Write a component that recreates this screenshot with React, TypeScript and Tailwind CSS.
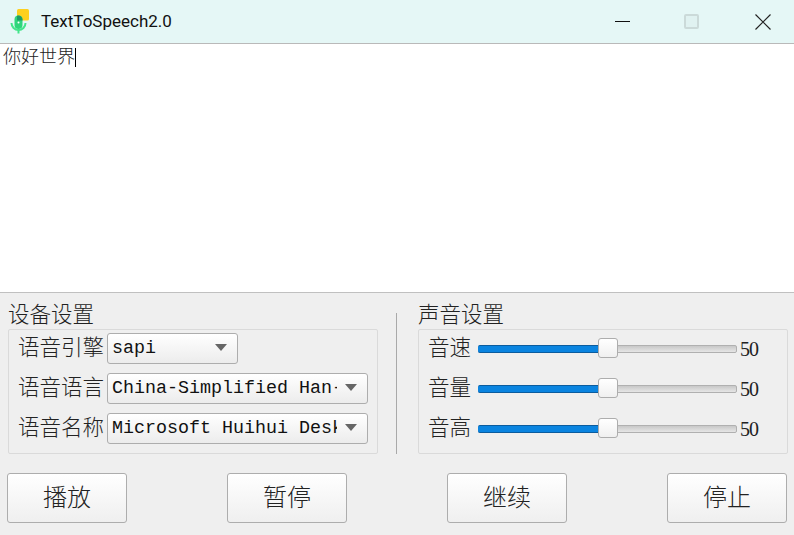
import React from 'react';

const cjk = "font-['Liberation_Serif','Noto_Sans_CJK_SC',serif]";

// 下拉框
const Combo = ({ text, width }: { text: string; width: string }) => (
  <div className={`${width} h-[31px] flex items-center justify-between pl-[4px] pr-[10px] bg-gradient-to-b from-white to-[#ececec] border border-[#adadad] rounded-[3px]`}>
    <span className="flex-1 min-w-0 pt-[1px] overflow-hidden whitespace-pre font-['Liberation_Mono',monospace] text-[18.33px] leading-[24px] text-[#111]">{text}</span>
    <span className="shrink-0 ml-[8px] mb-[2px] w-0 h-0 border-x-[6px] border-x-transparent border-t-[7px] border-t-[#666]" />
  </div>
);

const DeviceRow = ({ label, text, width }: { label: string; text: string; width: string }) => (
  <div className="flex items-center h-[31px]">
    <span className={`w-[89px] pt-[1px] text-[21.5px] font-light leading-none text-[#222] ${cjk}`}>{label}</span>
    <Combo text={text} width={width} />
  </div>
);

const SliderRow = ({ label }: { label: string }) => (
  <div className="flex items-center h-[31px]">
    <span className={`w-[50px] pt-[1px] text-[21.5px] font-light leading-none text-[#222] ${cjk}`}>{label}</span>
    <div className="relative mt-[1px] w-[259px] h-[8px] flex">
      <div className="w-[122px] bg-[#0a84e0] border-y border-[#0b5c9e] rounded-l-[2px]" />
      <div className="flex-1 bg-gradient-to-b from-[#c8c8c8] to-[#e6e6e6] border border-[#b0b0b0] rounded-r-[2px]" />
      <div className="absolute left-[120px] top-[-7px] w-[20px] h-[20px] bg-gradient-to-b from-white to-[#f0f0f0] border border-[#adadad] rounded-[3px]" />
    </div>
    <span className="ml-[3px] pt-[1px] font-['Liberation_Serif',serif] text-[20px] leading-none tracking-[-1px] text-[#222]">50</span>
  </div>
);

const ActionButton = ({ label }: { label: string }) => (
  <button className={`w-[120px] h-[50px] bg-gradient-to-b from-white to-[#efefef] border border-[#adadad] rounded-[3px] text-[24px] font-light text-[#222] ${cjk}`}>
    {label}
  </button>
);

const AppIcon = () => (
  <svg width="24" height="25" viewBox="0 0 24 25" className="shrink-0">
    <rect x="7" y="0" width="12" height="11.5" rx="1.5" fill="#fdd01f" />
    <rect x="4.5" y="6.5" width="8" height="13.5" rx="4" fill="#2fd67b" />
    <path d="M7 6.8a4 4 0 0 1 5.5 3.7v1H7z" fill="#1f9a66" />
    <path d="M1.5 14a7 7 0 0 0 14 0" fill="none" stroke="#43e58a" strokeWidth="2" />
    <rect x="7.5" y="21" width="2" height="3.5" fill="#43e58a" />
    <circle cx="8.5" cy="13.5" r="1" fill="#fff" />
  </svg>
);

export default function App() {
  return (
    <div className="w-[794px] h-[535px] flex flex-col bg-[#efefef] overflow-hidden">
      {/* Title bar */}
      <div className="h-[44px] shrink-0 flex items-center bg-[#e5f7f6] border-b border-[#b9b9b9]">
        <div className="ml-[10px] mt-[-1px]"><AppIcon /></div>
        <span className="ml-[7px] font-['Roboto','Liberation_Sans',sans-serif] text-[17px] text-[#111]">TextToSpeech2.0</span>
        <div className="ml-auto flex items-center">
          <svg width="15" height="2" className="mr-[54px]"><rect width="15" height="1" fill="#111" /></svg>
          <div className="mr-[56px] w-[15px] h-[15px] border-2 border-[#cbdad9] rounded-[2px] bg-[#e0f2f1]" />
          <svg width="16" height="16" viewBox="0 0 16 16" className="mr-[23px]">
            <path d="M0.5 0.5L15.5 15.5M15.5 0.5L0.5 15.5" stroke="#222" strokeWidth="1.2" />
          </svg>
        </div>
      </div>

      {/* Text area */}
      <div className="h-[249px] shrink-0 bg-white border-b border-[#c0c0c0] px-[3px] pt-[2px]">
        <div className={`flex items-center h-[22px] text-[18px] font-light leading-none text-[#222] ${cjk}`}>
          你好世界<span className="inline-block w-px h-[19px] bg-black" />
        </div>
      </div>

      {/* Settings */}
      <div className="flex pl-[8px] pr-[6px] pt-[9px]">
        <section className="w-[370px]">
          <div className={`h-[27px] text-[21.5px] font-light leading-[27px] text-[#222] ${cjk}`}>设备设置</div>
          <div className="h-[125px] flex flex-col gap-[9px] pl-[9px] pt-[3px] border border-[#dadada] rounded-[2px]">
            <DeviceRow label="语音引擎" text="sapi" width="w-[131px]" />
            <DeviceRow label="语音语言" text="China-Simplified Han-" width="w-[261px]" />
            <DeviceRow label="语音名称" text="Microsoft Huihui Desk" width="w-[261px]" />
          </div>
        </section>

        <div className="ml-[18px] mt-[11px] w-px h-[141px] bg-[#a9a9a9]" />

        <section className="ml-[21px] w-[370px]">
          <div className={`h-[27px] text-[21.5px] font-light leading-[27px] text-[#222] ${cjk}`}>声音设置</div>
          <div className="h-[125px] flex flex-col gap-[9px] pl-[9px] pt-[3px] border border-[#dadada] rounded-[2px]">
            <SliderRow label="音速" />
            <SliderRow label="音量" />
            <SliderRow label="音高" />
          </div>
        </section>
      </div>

      {/* Buttons */}
      <div className="flex justify-between pl-[7px] pr-[7px] mt-[19px]">
        <ActionButton label="播放" />
        <ActionButton label="暂停" />
        <ActionButton label="继续" />
        <ActionButton label="停止" />
      </div>
    </div>
  );
}
